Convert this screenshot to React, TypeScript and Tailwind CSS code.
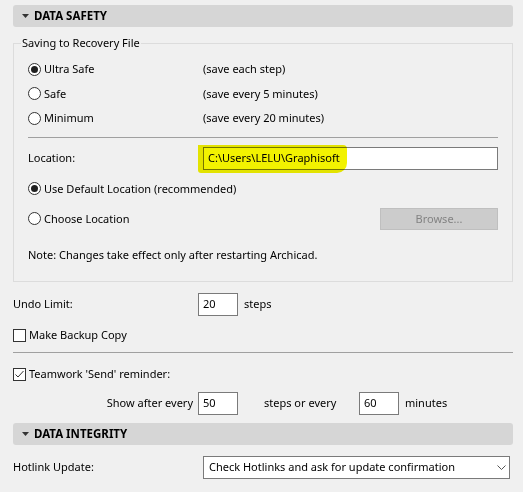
import React from "react";

function Radio({ checked }: { checked?: boolean }) {
  return (
    <span className="relative inline-flex h-[13px] w-[13px] shrink-0 items-center justify-center rounded-full border border-[#333333] bg-white">
      {checked && <span className="h-[7px] w-[7px] rounded-full bg-[#1f1f1f]" />}
    </span>
  );
}

function Check({ checked }: { checked?: boolean }) {
  return (
    <span className="inline-flex h-[13px] w-[13px] shrink-0 items-center justify-center border border-[#333333] bg-white">
      {checked && (
        <svg width="11" height="11" viewBox="0 0 11 11">
          <path d="M1.5 5.5 L4 8 L9.5 2" fill="none" stroke="#333" strokeWidth="1" />
        </svg>
      )}
    </span>
  );
}

function Header({ title }: { title: string }) {
  return (
    <div className="mx-[13px] flex h-[22px] w-[500px] items-center rounded-[3px] bg-[#d6d6d6]">
      <svg width="7" height="4" viewBox="0 0 7 4" className="ml-[9px]">
        <path d="M0 0 L7 0 L3.5 4 Z" fill="#333" />
      </svg>
      <span className="ml-[5px] text-[11.5px] font-bold text-black">{title}</span>
    </div>
  );
}

export default function App() {
  return (
    <div
      className="relative h-[492px] w-[523px] overflow-hidden bg-[#f0f0f0] text-[11px] leading-[16px] text-black"
      style={{ fontFamily: '"Noto Sans", "Open Sans", sans-serif' }}
    >
      <div className="h-[5px]" />
      <Header title="DATA SAFETY" />

      <fieldset className="mx-[13px] mt-[8px] w-[500px] border border-[#dcdcdc] px-[14px] pb-[0px]">
        <legend className="ml-[-7px] px-[1px]">Saving to Recovery File</legend>
        <div className="h-[6px]" />
        {[
          ["Ultra Safe", "(save each step)", true],
          ["Safe", "(save every 5 minutes)", false],
          ["Minimum", "(save every 20 minutes)", false],
        ].map(([a, b, c]) => (
          <div key={a as string} className="flex h-[24.5px] items-center">
            <div className="flex w-[175px] items-center">
              <Radio checked={c as boolean} />
              <span className="ml-[3px]">{a}</span>
            </div>
            <span>{b}</span>
          </div>
        ))}
        <div className="mt-[6px] h-px bg-[#a0a0a0]" />
        <div className="mt-[9px] flex h-[23px] items-center">
          <span className="w-[175px]">Location:</span>
          <div className="relative flex h-[23px] flex-1 items-center border border-[#7a7a7a] bg-white pl-[4px]">
            C:\Users\LELU\Graphisoft
            <div className="pointer-events-none absolute left-[-6px] top-[-3px] h-[28px] w-[149px] rounded-br-[10px] rounded-tr-[4px] rounded-bl-[3px] bg-[#f2f200] mix-blend-multiply" />
          </div>
        </div>
        <div className="mt-[7px] flex h-[24px] items-center">
          <Radio checked />
          <span className="ml-[3px]">Use Default Location (recommended)</span>
        </div>
        <div className="mt-[7px] flex h-[22px] items-center">
          <Radio />
          <span className="ml-[3px]">Choose Location</span>
          <div className="ml-auto flex h-[22px] w-[118px] items-center justify-center border border-[#bfbfbf] bg-[#cccccc] text-[#838383]">
            Browse...
          </div>
        </div>
        <div className="mt-[17px] flex h-[16px] items-center">
          Note: Changes take effect only after restarting Archicad.
        </div>
        <div className="h-[18px]" />
      </fieldset>

      <div className="mx-[13px] mt-[11px] flex h-[23px] items-center">
        <span className="w-[185px]">Undo Limit:</span>
        <div className="flex h-[23px] w-[40px] items-center border border-[#7a7a7a] bg-white pl-[4px]">20</div>
        <span className="ml-[6px]">steps</span>
      </div>
      <div className="mx-[13px] mt-[12px] flex h-[15px] items-center">
        <Check />
        <span className="ml-[3px]">Make Backup Copy</span>
      </div>
      <div className="mx-[13px] mt-[9px] h-px w-[500px] bg-[#a0a0a0]" />
      <div className="mx-[13px] mt-[14px] flex h-[15px] items-center">
        <Check checked />
        <span className="ml-[3px]">Teamwork 'Send' reminder:</span>
      </div>
      <div className="mx-[13px] mt-[10px] flex h-[23px] items-center">
        <span className="w-[180px] text-right">Show after every</span>
        <div className="ml-[5px] flex h-[23px] w-[40px] items-center border border-[#7a7a7a] bg-white pl-[4px]">50</div>
        <span className="ml-[26px] w-[95px]">steps or every</span>
        <div className="flex h-[23px] w-[40px] items-center border border-[#7a7a7a] bg-white pl-[4px]">60</div>
        <span className="ml-[6px]">minutes</span>
      </div>
      <div className="h-[8px]" />
      <Header title="DATA INTEGRITY" />
      <div className="mx-[13px] mt-[11px] flex h-[23px] items-center">
        <span className="w-[190px]">Hotlink Update:</span>
        <div className="flex h-[23px] flex-1 items-center border border-[#7a7a7a] bg-white pl-[5px]">
          <span className="flex-1">Check Hotlinks and ask for update confirmation</span>
          <svg width="9" height="5" viewBox="0 0 9 5" className="mr-[3px]">
            <path d="M0.5 0.5 L4.5 4.5 L8.5 0.5" fill="none" stroke="#555" strokeWidth="1" />
          </svg>
        </div>
      </div>
    </div>
  );
}
